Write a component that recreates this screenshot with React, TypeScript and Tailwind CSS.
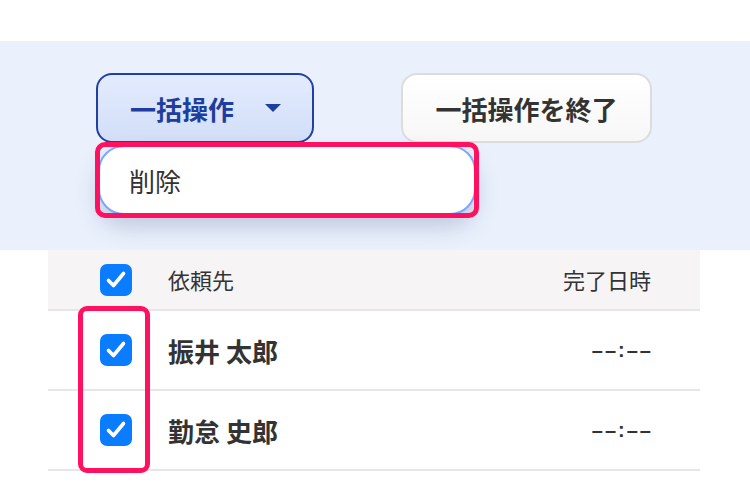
import React from "react";

const font = { fontFamily: '"Noto Sans CJK JP", "Noto Sans", sans-serif' };

function Check() {
  return (
    <div className="w-[32px] h-[32px] rounded-[7px] bg-[#0a7cff] flex items-center justify-center">
      <svg width="32" height="32" viewBox="0 0 32 32" fill="none">
        <path d="M8.5 16.5 L13.5 21.5 L23.5 9.5" stroke="white" strokeWidth="3.6" strokeLinecap="round" strokeLinejoin="round" />
      </svg>
    </div>
  );
}

export default function App() {
  return (
    <div className="w-[750px] h-[490px] bg-white overflow-hidden" style={font}>
      <div className="h-[41px]" />
      <div className="h-[209px] bg-[#eaf1fd] relative">
        <div className="flex pt-[32px] pl-[96px] gap-[87px]">
          <button className="w-[218px] h-[70px] rounded-[16px] border-2 border-[#2140a3] bg-gradient-to-b from-[#e3ebfe] to-[#d2dff8] flex items-center pl-[32px] text-[#1f3d9e] text-[26px] font-bold">
            <span>一括操作</span>
            <svg className="ml-[30px]" width="18" height="10" viewBox="0 0 18 10">
              <path d="M1 1 L17 1 L9 9 Z" fill="#1f3d9e" />
            </svg>
          </button>
          <button className="w-[251px] h-[70px] rounded-[16px] border-2 border-[#dcdcdc] bg-gradient-to-b from-white to-[#f7f7f7] flex items-center justify-center text-[#333] text-[26px] font-bold">
            一括操作を終了
          </button>
        </div>
        <div className="absolute left-[98px] top-[104px] w-[378px] h-[70px] rounded-[26px] bg-white border-2 border-[#7aa8ff] flex items-center pl-[29px] text-[26px] text-[#333] shadow-[0_12px_22px_rgba(40,60,110,0.22)]">
          削除
        </div>
        <div className="absolute left-[95px] top-[101px] w-[384px] h-[76px] rounded-[10px] border-[5px] border-[#ff1160]" />
      </div>
      <div className="ml-[48px] w-[652px] relative">
        <div className="h-[61px] bg-[#f6f4f5] border-b-2 border-[#e6e6e6] flex items-center">
          <div className="w-[52px]" />
          <Check />
          <div className="ml-[36px] text-[22px] text-[#333] flex-1">依頼先</div>
          <div className="pr-[49px] text-[22px] text-[#333]">完了日時</div>
        </div>
        {["振井 太郎", "勤怠 史郎"].map((n) => (
          <div key={n} className="h-[80px] border-b-2 border-[#e6e6e6] flex items-center">
            <div className="w-[52px]" />
            <Check />
            <div className="ml-[36px] text-[26px] font-bold text-[#333] flex-1">{n}</div>
            <div
              className="pr-[49px] text-[20px] font-bold text-[#333] tracking-[2px] mr-[-2px]"
              style={{ fontFamily: '"Liberation Sans", sans-serif' }}
            >
              ––:––
            </div>
          </div>
        ))}
        <div className="absolute left-[30px] top-[56px] w-[72px] h-[167px] rounded-[9px] border-[5px] border-[#ff1160]" />
      </div>
    </div>
  );
}
